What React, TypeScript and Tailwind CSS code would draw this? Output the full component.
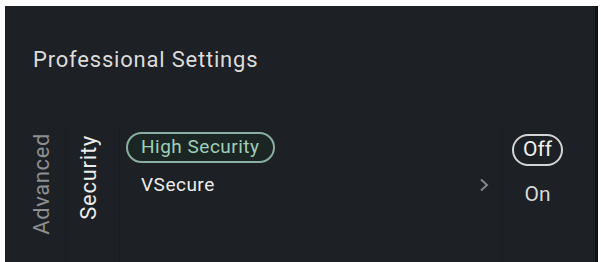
import React from "react";

export default function App() {
  return (
    <div className="w-[601px] h-[262px] bg-white pt-[6px] pl-[5px] pr-[3px] flex" style={{ fontFamily: "Roboto, 'Noto Sans', sans-serif" }}>
      <div className="flex-1 bg-[#1d2024] border-r-[3px] border-[#101113] flex flex-col">
        <div className="h-[119px] pl-[28px] pt-[39px]">
          <div className="text-[22px] leading-[30px] tracking-[0.8px] text-[#dcdcdc]">Professional Settings</div>
        </div>
        <div className="flex-1 flex">
          <div className="w-[61px] border-r border-[#1a1c1f] flex items-start pl-[26px] pt-[8px]">
            <div className="[writing-mode:vertical-rl] rotate-180 text-[22px] leading-[22px] tracking-[0.6px] text-[#8c8e90]">Advanced</div>
          </div>
          <div className="w-[54px] border-r border-[#1a1c1f] flex items-start pl-[12px] pt-[10px]">
            <div className="[writing-mode:vertical-rl] rotate-180 text-[22px] leading-[22px] tracking-[0.75px] text-[#ececec]">Security</div>
          </div>
          <div className="flex-1 border-r border-[#1a1c1f] pl-[6px] pr-[13px] pt-[7px] flex flex-col">
            <div className="flex">
              <div className="h-[31px] rounded-full border-2 border-[#8aaea0] bg-[#1b2624] px-[13px] flex items-center text-[19px] tracking-[0.5px] text-[#9fcfb9]">High Security</div>
            </div>
            <div className="flex items-center justify-between h-[44px] pl-[15px]">
              <span className="text-[19px] tracking-[0.5px] text-[#ececec]">VSecure</span>
              <svg width="10" height="14" viewBox="0 0 10 14" fill="none">
                <path d="M2 1.5 L8 7 L2 12.5" stroke="#85888b" strokeWidth="2" />
              </svg>
            </div>
          </div>
          <div className="w-[92px] pl-[9px] pt-[9px] flex flex-col">
            <div className="flex">
              <div className="h-[32px] w-[51px] rounded-full border-2 border-[#d4d4d4] flex items-center justify-center text-[21px] text-[#f0f0f0]">Off</div>
            </div>
            <div className="w-[51px] text-center text-[21px] leading-[25px] text-[#d8d8d8] mt-[16px]">On</div>
          </div>
        </div>
      </div>
    </div>
  );
}
